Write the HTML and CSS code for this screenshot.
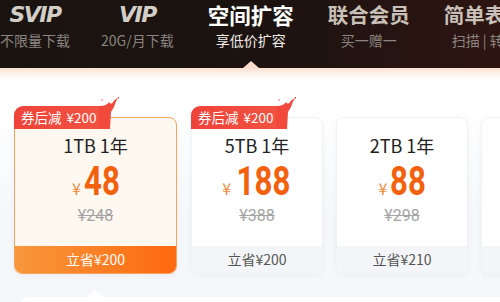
FILE: index.html
```html
<!DOCTYPE html>
<html lang="zh-CN">
<head>
    <meta charset="UTF-8">
    <meta name="viewport" content="width=device-width, initial-scale=1.0">
    <title>空间扩容</title>
    <link rel="stylesheet" href="styles.css">
</head>
<body>
    <div class="top">
        <div class="tabs">
            <div class="tab">
                <div class="logo">SVIP</div>
                <div class="sub">不限量下载</div>
            </div>
            <div class="sep"></div>
            <div class="tab">
                <div class="logo">VIP</div>
                <div class="sub">20G/月下载</div>
            </div>
            <div class="sep"></div>
            <div class="tab tab-on">
                <div class="name">空间扩容</div>
                <div class="sub">享低价扩容</div>
            </div>
            <div class="sep"></div>
            <div class="tab">
                <div class="name">联合会员</div>
                <div class="sub">买一赠一</div>
            </div>
            <div class="sep"></div>
            <div class="tab">
                <div class="name">简单表格</div>
                <div class="sub">扫描 | 转换</div>
            </div>
        </div>
    </div>

    <div class="panel">
        <div class="cards">
            <div class="card card-on">
                <span class="tag">券后减 ¥200
                    <svg class="flame" viewBox="0 0 20 32"><path d="M0 9 C5 9 8 8 10 5 C11 7 13 7 14 5 C15 3 17 2 19 1 C17 4 16 7 15 10 C14 12 13 13 12 15 L11 32 L0 32 Z" fill="#f14a3d"/><circle cx="3" cy="3" r="1" fill="#f7a0a8"/><circle cx="19.5" cy="0.8" r="0.8" fill="#e0303a"/></svg>
                </span>
                <div class="body">
                    <div class="size">1TB 1年</div>
                    <div class="price"><span class="yen">¥</span><span class="num">48</span></div>
                    <div class="orig">¥248</div>
                </div>
                <div class="save">立省¥200</div>
            </div>
            <div class="card">
                <span class="tag">券后减 ¥200
                    <svg class="flame" viewBox="0 0 20 32"><path d="M0 9 C5 9 8 8 10 5 C11 7 13 7 14 5 C15 3 17 2 19 1 C17 4 16 7 15 10 C14 12 13 13 12 15 L11 32 L0 32 Z" fill="#f14a3d"/><circle cx="3" cy="3" r="1" fill="#f7a0a8"/><circle cx="19.5" cy="0.8" r="0.8" fill="#e0303a"/></svg>
                </span>
                <div class="body">
                    <div class="size">5TB 1年</div>
                    <div class="price"><span class="yen">¥</span><span class="num">188</span></div>
                    <div class="orig">¥388</div>
                </div>
                <div class="save">立省¥200</div>
            </div>
            <div class="card">
                <div class="body">
                    <div class="size">2TB 1年</div>
                    <div class="price"><span class="yen">¥</span><span class="num">88</span></div>
                    <div class="orig">¥298</div>
                </div>
                <div class="save">立省¥210</div>
            </div>
            <div class="card">
                <div class="body"></div>
                <div class="save"></div>
            </div>
        </div>
        <div class="below"></div>
    </div>
</body>
</html>
```

FILE: styles.css
```css
body {
    margin: 0;
    width: 500px;
    height: 302px;
    overflow: hidden;
    font-family: "Noto Sans CJK SC", sans-serif;
    background: #f6f7fa;
}
.top {
    height: 68px;
    background: linear-gradient(90deg, #1a1411 0%, #1c1310 55%, #2e1512 100%);
    overflow: hidden;
}
.tabs {
    display: flex;
    margin-left: -17px;
    white-space: nowrap;
}
.tab {
    position: relative;
    padding: 0 17px;
    height: 68px;
    text-align: center;
}
.tab:first-child {
    padding-right: 14px;
}
.tab-on::after {
    content: "";
    position: absolute;
    left: 50%;
    bottom: 0;
    margin-left: -8px;
    border: 8px solid transparent;
    border-top: 0;
    border-bottom: 7px solid #f9dccb;
}
.logo {
    line-height: 30px;
    height: 28px;
    font-family: "DejaVu Sans", sans-serif;
    font-size: 22px;
    font-weight: bold;
    font-style: italic;
    letter-spacing: -1.5px;
    color: #d4cec8;
}
.name {
    padding-top: 1px;
    line-height: 27px;
    font-size: 20.5px;
    font-weight: bold;
    color: #c9c0b8;
}
.sub {
    margin-top: 4px;
    line-height: 16px;
    font-size: 14px;
    color: #8c8580;
}
.tab-on .name {
    color: #fff;
    font-size: 21.5px;
}
.tab-on .sub {
    color: #f2ece8;
}
.sep {
    width: 1px;
    height: 28px;
    margin-top: 12px;
    background: rgba(255,255,255,0.14);
}
.panel {
    height: 234px;
    background: linear-gradient(#fbe0cf 0, #fdf1ea 5px, #fff 12px, #fff 40px, #f6f7fa 150px);
}
.cards {
    display: flex;
    gap: 13px;
    padding: 49px 0 0 14px;
}
.card {
    position: relative;
    flex: none;
    width: 132px;
    height: 157px;
    box-sizing: border-box;
    display: flex;
    flex-direction: column;
    background: #fff;
    border-radius: 8px;
    border: 1px solid #f1f2f5;
    box-shadow: 0 2px 6px rgba(0,0,0,0.04);
}
.card-on {
    width: 163px;
    margin-right: 1px;
    background: #fff8f1;
    border: 1.5px solid #f2a55f;
}
.tag {
    position: absolute;
    top: -12px;
    left: -1px;
    height: 23px;
    padding: 0 12px 0 7px;
    line-height: 23px;
    font-size: 13.5px;
    word-spacing: 2px;
    color: #fff;
    background: linear-gradient(90deg, #ef4339, #f25443);
    border-radius: 9px 0 9px 0;
    z-index: 1;
}
.flame {
    position: absolute;
    right: -10px;
    top: -9px;
    width: 20px;
    height: 32px;
}
.body {
    flex: 1;
    padding-top: 18px;
    text-align: center;
}
.size {
    line-height: 18px;
    font-size: 18px;
    color: #222;
}
.price {
    margin-top: 8px;
    height: 40px;
    line-height: 40px;
    color: #f2620e;
}
.yen {
    font-size: 16px;
    color: #ec8b3c;
    margin-right: 4px;
}
.num {
    display: inline-block;
    margin: 0 -6px;
    font-family: Roboto, sans-serif;
    font-size: 40px;
    font-weight: bold;
    transform: scaleX(0.78);
}
.orig {
    margin-top: 5px;
    line-height: 18px;
    font-family: Roboto, sans-serif;
    font-size: 16px;
    color: #a3a3a3;
    text-decoration: line-through;
}
.save {
    height: 27px;
    line-height: 27px;
    text-align: center;
    font-size: 14px;
    color: #555;
    background: #f4f5f8;
    border-radius: 0 0 8px 8px;
}
.card-on .save {
    color: #fff;
    background: linear-gradient(90deg, #f8973c, #ff690f);
    border-radius: 0 0 7px 7px;
}
.below {
    position: relative;
    height: 20px;
    margin: 23px 0 0 20px;
    background: #fff;
    border-radius: 8px 0 0 0;
}
.below::before {
    content: "";
    position: absolute;
    left: 67px;
    top: -7px;
    border: 8px solid transparent;
    border-top: 0;
    border-bottom: 7px solid #fff;
}
```
